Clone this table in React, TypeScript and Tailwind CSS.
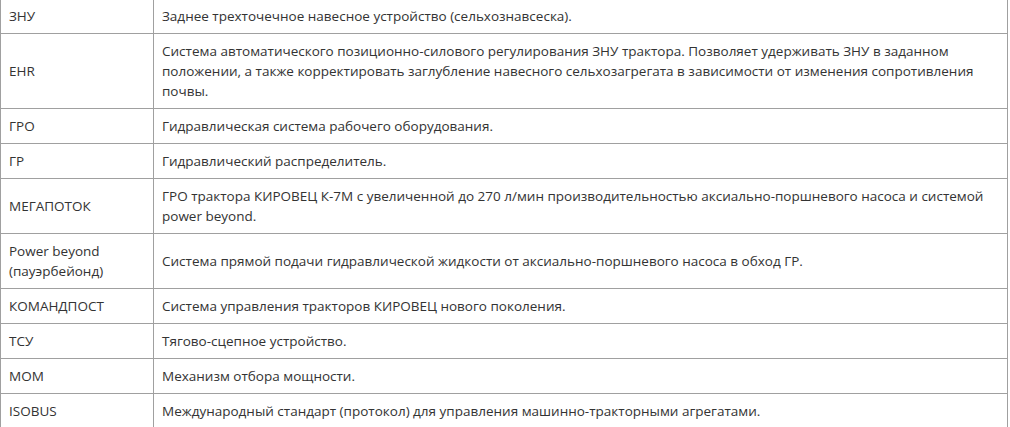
const rows: { term: string[]; text: string }[] = [
  { term: ['ЗНУ'], text: 'Заднее трехточечное навесное устройство (сельхознавсеска).' },
  {
    term: ['EHR'],
    text: 'Система автоматического позиционно-силового регулирования ЗНУ трактора. Позволяет удерживать ЗНУ в заданном положении, а также корректировать заглубление навесного сельхозагрегата в зависимости от изменения сопротивления почвы.',
  },
  { term: ['ГРО'], text: 'Гидравлическая система рабочего оборудования.' },
  { term: ['ГР'], text: 'Гидравлический распределитель.' },
  {
    term: ['МЕГАПОТОК'],
    text: 'ГРО трактора КИРОВЕЦ К-7М с увеличенной до 270 л/мин производительностью аксиально-поршневого насоса и системой power beyond.',
  },
  {
    term: ['Power beyond', '(пауэрбейонд)'],
    text: 'Система прямой подачи гидравлической жидкости от аксиально-поршневого насоса в обход ГР.',
  },
  { term: ['КОМАНДПОСТ'], text: 'Система управления тракторов КИРОВЕЦ нового поколения.' },
  { term: ['ТСУ'], text: 'Тягово-сцепное устройство.' },
  { term: ['МОМ'], text: 'Механизм отбора мощности.' },
  { term: ['ISOBUS'], text: 'Международный стандарт (протокол) для управления машинно-тракторными агрегатами.' },
];

export default function App() {
  return (
    <div className="w-[1010px] h-[427px] overflow-hidden bg-white">
      <table className="-mt-[2px] w-[1008px] border-collapse font-['Open_Sans',sans-serif] text-[13.5px] leading-[20px] text-[#333]">
        <tbody>
          {rows.map((row) => (
            <tr key={row.term[0]}>
              <td className="w-[153px] border border-[#a0a0a0] px-2 py-[7px] align-middle">
                {row.term.map((t) => (
                  <div key={t}>{t}</div>
                ))}
              </td>
              <td className="border border-[#a0a0a0] px-2 py-[7px] align-middle">{row.text}</td>
            </tr>
          ))}
        </tbody>
      </table>
    </div>
  );
}
